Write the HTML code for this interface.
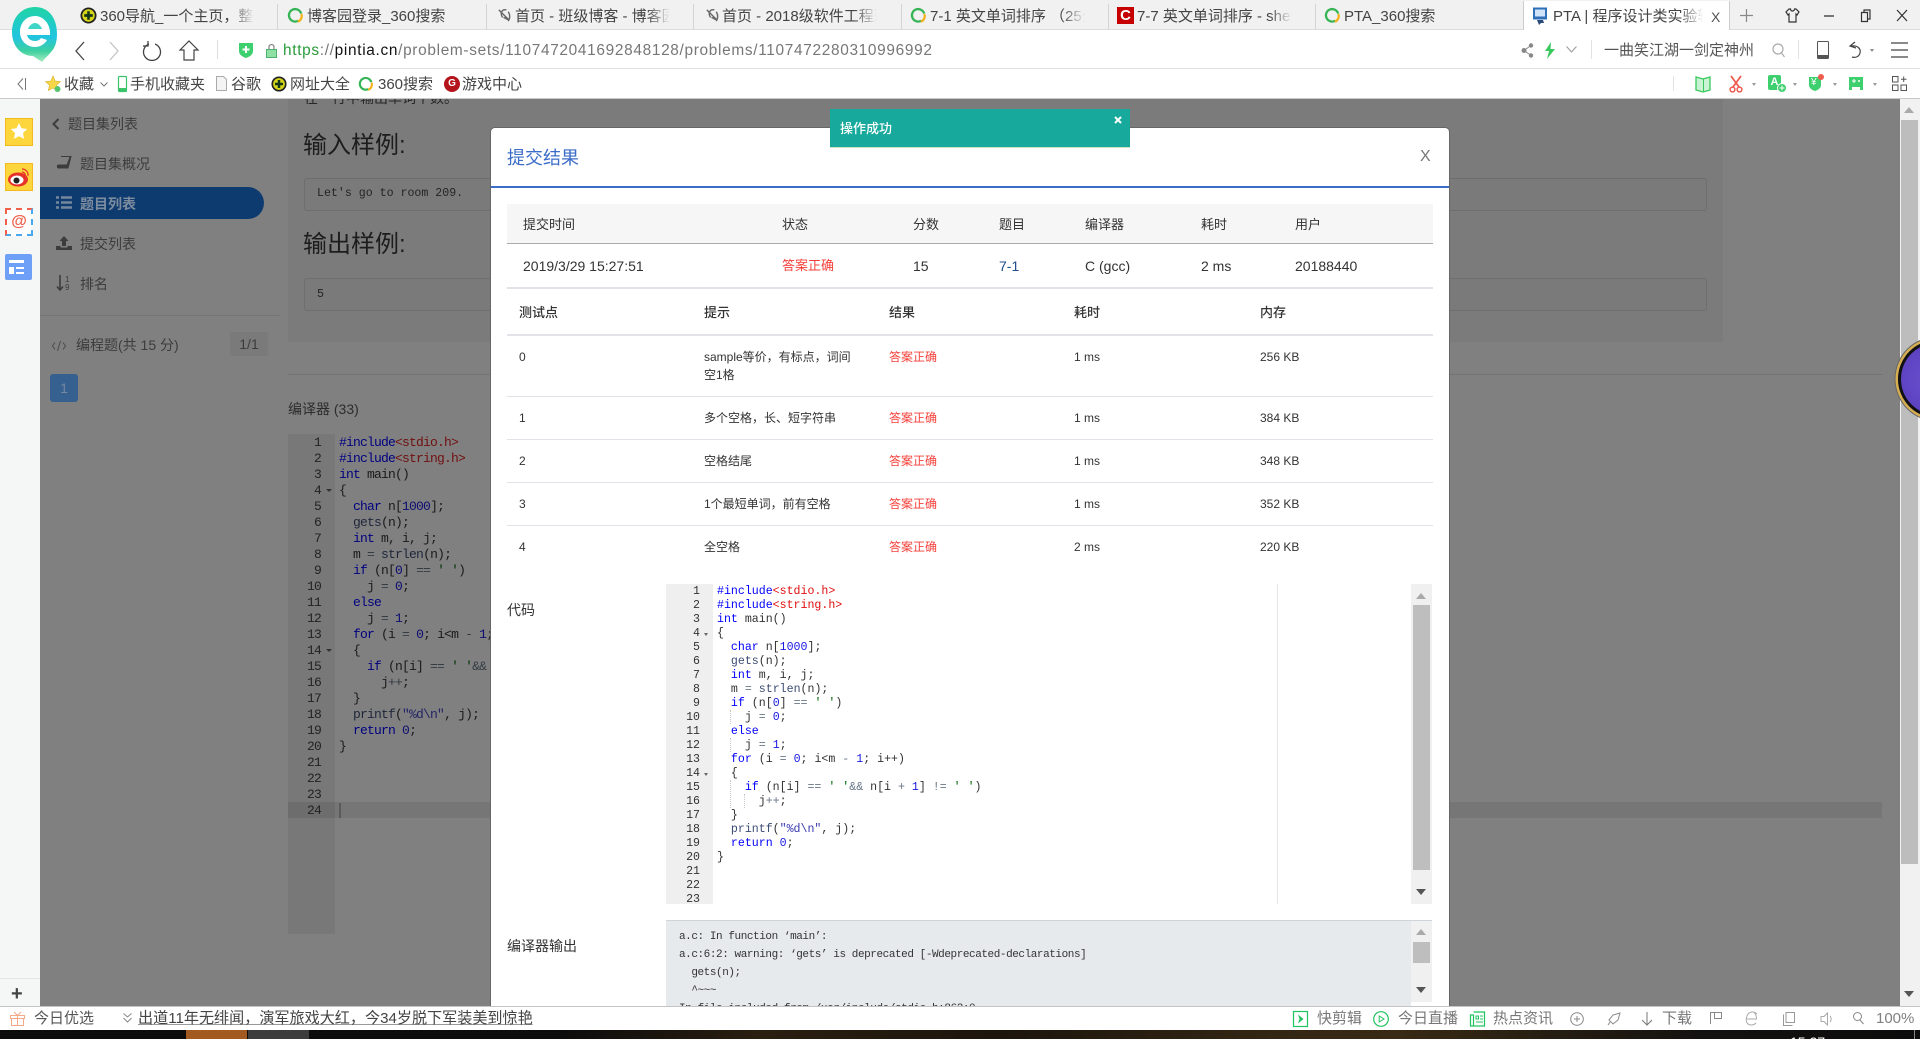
<!DOCTYPE html>
<html lang="zh"><head><meta charset="utf-8"><title>PTA</title>
<style>
html,body{margin:0;padding:0;width:1920px;height:1039px;overflow:hidden;background:#fff}
body{position:relative;font-family:"Liberation Sans","Noto Sans CJK SC",sans-serif;color:#333}
.a{position:absolute}
.t{position:absolute;white-space:nowrap;line-height:20px;height:20px}
svg{position:absolute;overflow:visible}
.tab{color:#444;font-size:15px;overflow:hidden;-webkit-mask-image:linear-gradient(90deg,#000 85%,transparent);mask-image:linear-gradient(90deg,#000 85%,transparent)}
.sep{position:absolute;width:1px;background:#d4d4d4}
.bm{font-size:15px;color:#444}
.nav{font-size:14px;color:#3c3c3c}
.c13{font-size:13px;color:#333}
.c12{font-size:12px;color:#333}
.c14{font-size:14px;color:#333}
.ok{font-size:12px;color:#f5403a}
.h{font-weight:500}
.hr{position:absolute;left:16px;width:926px;background:#e2e3e8}
pre{margin:0;position:absolute;font-family:"Liberation Mono",monospace;white-space:pre}
.m{font-size:11.6px;line-height:14px;color:#333}
.m .k{color:#00f}.m .i{color:#e01010}.m .n{color:#1a1ae0}.m .f{color:#3c4c72}.m .o{color:#687687}.m .s{color:#036a07}.m .v{color:#3a3ab0}
.b{font-size:13px;letter-spacing:-.8px;line-height:16px;color:#1a1a1a}
.b .k{color:#00007f}.b .i{color:#701010}.b .n{color:#0d0d70}.b .f{color:#1e2639}.b .o{color:#343b43}.b .s{color:#013503}.b .v{color:#232366}
.st{font-size:15px;color:#777}
.hd{font-size:24px;color:#1d1d1d}
.box{position:absolute;left:304px;width:1401px;height:31px;background:#7a7a7a;border:1px solid #6e6e6e;border-radius:3px}
.tri-u{position:absolute;width:0;height:0;border-left:5px solid transparent;border-right:5px solid transparent;border-bottom:6px solid #a9a9a9}
.tri-d{position:absolute;width:0;height:0;border-left:5px solid transparent;border-right:5px solid transparent;border-top:6px solid #555}
.guide{position:absolute;width:0;border-left:1px dotted #c8c8c8}
</style></head><body>
<svg width="0" height="0" style="position:absolute"><defs>
<symbol id="nav" viewBox="0 0 18 18"><circle cx="9" cy="9" r="8.5" fill="#222"/><circle cx="9" cy="9" r="6.6" fill="#d6d51a"/><path d="M9 4.5v9M4.5 9h9" stroke="#14371a" stroke-width="2.8"/></symbol>
<symbol id="q" viewBox="0 0 18 18"><path d="M12 14.5A6.6 6.6 0 1 1 15 7" fill="none" stroke="#35b455" stroke-width="2.4"/><path d="M15.3 7.5A6.6 6.6 0 0 1 11.5 15.6" fill="none" stroke="#f4b21c" stroke-width="2.4"/></symbol>
<symbol id="blog" viewBox="0 0 18 18"><path d="M3 3 14 14 8 11 M11 3C6 2 4 7 7 11M13 5c2 3 2 7 0 10" fill="none" stroke="#666" stroke-width="1.5"/></symbol>
</defs></svg>

<!-- tab bar -->
<div class="a" style="left:0;top:0;width:1920px;height:30px;background:#f1f1f1"></div>
<div class="a" style="left:0;top:29px;width:1920px;height:1px;background:#dcdcdc"></div>
<div class="sep" style="left:277px;top:4px;height:26px"></div><div class="sep" style="left:486px;top:4px;height:26px"></div><div class="sep" style="left:693px;top:4px;height:26px"></div><div class="sep" style="left:901px;top:4px;height:26px"></div><div class="sep" style="left:1108px;top:4px;height:26px"></div><div class="sep" style="left:1315px;top:4px;height:26px"></div>
<svg style="left:80px;top:7px" width="17" height="17"><use href="#nav"/></svg>
<div class="t tab" style="left:100px;top:7px;width:154px">360导航_一个主页，整个世界</div>
<svg style="left:287px;top:7px" width="17" height="17"><use href="#q"/></svg>
<div class="t c14" style="left:307px;top:7px;font-size:15px;color:#444">博客园登录_360搜索</div>
<svg style="left:496px;top:7px" width="17" height="17"><use href="#blog"/></svg>
<div class="t tab" style="left:515px;top:7px;width:155px">首页 - 班级博客 - 博客园首页</div>
<svg style="left:704px;top:7px" width="17" height="17"><use href="#blog"/></svg>
<div class="t tab" style="left:722px;top:7px;width:155px">首页 - 2018级软件工程班级</div>
<svg style="left:910px;top:7px" width="17" height="17"><use href="#q"/></svg>
<div class="t tab" style="left:930px;top:7px;width:155px">7-1 英文单词排序 （25分）</div>
<div class="a" style="left:1117px;top:7px;width:17px;height:17px;background:#c60000;color:#fff;font:bold 15px/17px 'Liberation Sans';text-align:center">C</div>
<div class="t tab" style="left:1137px;top:7px;width:155px">7-7 英文单词排序 - shell</div>
<svg style="left:1324px;top:7px" width="17" height="17"><use href="#q"/></svg>
<div class="t" style="left:1344px;top:7px;font-size:15px;color:#444">PTA_360搜索</div>
<div class="a" style="left:1523px;top:1px;width:207px;height:30px;background:#fff;border-left:1px solid #ccc;border-right:1px solid #ccc;box-sizing:border-box"></div>
<svg style="left:1532px;top:7px" width="17" height="18" viewBox="0 0 17 18"><rect x="1" y="0.5" width="14" height="12" fill="#2f6fb8"/><rect x="3" y="2.5" width="10" height="7" fill="#cfe4f8"/><path d="M5 13h6l1 3H9l-2 2z" fill="#2a4a7a"/></svg>
<div class="t tab" style="left:1553px;top:7px;width:150px">PTA | 程序设计类实验辅助教学</div>
<div class="t" style="left:1711px;top:7px;font-size:14px;color:#555">X</div>
<svg style="left:1739px;top:8px" width="15" height="15"><path d="M7.5 1v13M1 7.5h13" stroke="#888" stroke-width="1.2"/></svg>
<svg style="left:1785px;top:8px" width="15" height="15"><path d="M4 1 1 4l2 3 1-1v8h7V6l1 1 2-3-3-3H9.500a2 2 0 0 1-4 0z" fill="none" stroke="#333" stroke-width="1.2"/></svg>
<svg style="left:1823px;top:8px" width="13" height="14"><path d="M1 8h10" stroke="#333" stroke-width="1.300"/></svg>
<svg style="left:1860px;top:9px" width="12" height="13"><path d="M1.500 3.500h6v9h-6zM4 3.500V1h6v9H7.500" fill="none" stroke="#333" stroke-width="1.200"/></svg>
<svg style="left:1896px;top:9px" width="12" height="13"><path d="M1 1l10 11M11 1 1 12" stroke="#333" stroke-width="1.200"/></svg>

<!-- address bar -->
<div class="a" style="left:0;top:30px;width:1920px;height:38px;background:#fff;border-bottom:1px solid #e2e2e2"></div>
<svg style="left:74px;top:41px" width="12" height="20"><path d="M10 1 2 10l8 9" fill="none" stroke="#444" stroke-width="1.300"/></svg>
<svg style="left:108px;top:41px" width="12" height="20"><path d="M2 1l8 9-8 9" fill="none" stroke="#c4c4c4" stroke-width="1.300"/></svg>
<svg style="left:142px;top:40px" width="20" height="21"><path d="M7 3A8.500 8.500 0 1 0 13 3M6 0v5H1" fill="none" stroke="#444" stroke-width="1.300" transform="translate(0 1)"/></svg>
<svg style="left:179px;top:40px" width="20" height="21"><path d="M1 10 10 1l9 9h-4v10H5V10z" fill="none" stroke="#444" stroke-width="1.200"/></svg>
<div class="sep" style="left:217px;top:40px;height:19px;background:#ddd"></div>
<svg style="left:239px;top:42px" width="14" height="16"><path d="M0 1h14v8c0 4-4 6-7 7-3-1-7-3-7-7z" fill="#3ecf6f"/><path d="M7 4v7M3.500 7.500h7" stroke="#fff" stroke-width="2"/></svg>
<svg style="left:266px;top:43px" width="11" height="15"><path d="M3 7V4a2.500 2.500 0 0 1 5 0v3" fill="none" stroke="#888" stroke-width="1.300"/><rect x="0.500" y="6.500" width="10" height="8" fill="#8fe0a5" stroke="#50b070"/></svg>
<div class="t" style="left:283px;top:41px;font-size:15.4px;letter-spacing:.68px;color:#777"><span style="color:#2a9b3c">https</span>://<span style="color:#111">pintia.cn</span>/problem-sets/1107472041692848128/problems/1107472280310996992</div>
<svg style="left:1521px;top:43px" width="13" height="15"><circle cx="3" cy="7.500" r="2.500" fill="#888"/><circle cx="10" cy="2.500" r="2.200" fill="#888"/><circle cx="10" cy="12.500" r="2.200" fill="#888"/><path d="M3 7.500 10 2.500M3 7.500l7 5" stroke="#888"/></svg>
<svg style="left:1545px;top:42px" width="10" height="17"><path d="M6 0 0 9h4l-2 8 8-10H5.500z" fill="#38c85e"/></svg>
<svg style="left:1566px;top:46px" width="11" height="7"><path d="M0.500 0.500 5.500 6l5-5.500" fill="none" stroke="#999"/></svg>
<div class="sep" style="left:1591px;top:40px;height:19px;background:#e2e2e2"></div>
<div class="t" style="left:1604px;top:41px;font-size:15px;color:#555">一曲笑江湖一剑定神州</div>
<svg style="left:1772px;top:43px" width="14" height="15"><circle cx="6" cy="6" r="5" fill="none" stroke="#aaa" stroke-width="1.200"/><path d="M9.500 10l3 4" stroke="#aaa" stroke-width="1.200"/></svg>
<div class="sep" style="left:1798px;top:40px;height:19px;background:#e2e2e2"></div>
<svg style="left:1817px;top:41px" width="12" height="18"><rect x="0.500" y="0.500" width="11" height="17" rx="1" fill="none" stroke="#555"/><rect x="0.500" y="14" width="11" height="3.500" fill="#555"/></svg>
<svg style="left:1848px;top:41px" width="16" height="18"><path d="M7 1 2 5l6 2M3 5c7-1 10 3 9 7s-5 5-8 4" fill="none" stroke="#444" stroke-width="1.200"/></svg>
<div class="a" style="left:1870px;top:49px;border-left:2.500px solid transparent;border-right:2.500px solid transparent;border-top:3px solid #888"></div>
<svg style="left:1891px;top:42px" width="17" height="16"><path d="M0 1h17M0 8h17M0 15h17" stroke="#444" stroke-width="1.300"/></svg>

<!-- bookmarks -->
<div class="a" style="left:0;top:69px;width:1920px;height:29px;background:#fff"></div>
<div class="a" style="left:0;top:98px;width:1920px;height:1px;background:#c9c9c9"></div>
<svg style="left:16px;top:78px" width="10" height="12"><path d="M7 0.500 2 6l5 5.500M9.500 0v12" fill="none" stroke="#777"/></svg>
<svg style="left:45px;top:75px" width="16" height="18"><path d="M8 1l2.200 5 5.300.6-4 3.600 1.200 5.300L8 13l-4.700 2.500 1.200-5.300-4-3.600 5.300-.6z" fill="#f7d74a" stroke="#d9ad2a" stroke-width=".6"/><circle cx="12.500" cy="14" r="3" fill="#53c46f"/></svg>
<div class="t bm" style="left:64px;top:75px">收藏</div>
<svg style="left:100px;top:82px" width="8" height="5"><path d="M0.500 0.500 4 4l3.500-3.500" fill="none" stroke="#777"/></svg>
<svg style="left:118px;top:76px" width="9" height="16"><rect x="0.500" y="0.500" width="8" height="15" rx="1" fill="#fff" stroke="#3cc46a" stroke-width="1.200"/><rect x="1" y="12" width="7" height="3.500" fill="#3cc46a"/></svg>
<div class="t bm" style="left:130px;top:75px">手机收藏夹</div>
<svg style="left:216px;top:76px" width="11" height="15"><path d="M0.500 0.500h7l3 3v11H.5z" fill="#f4f4f4" stroke="#aaa"/></svg>
<div class="t bm" style="left:231px;top:75px">谷歌</div>
<svg style="left:271px;top:76px" width="16" height="16"><use href="#nav"/></svg>
<div class="t bm" style="left:290px;top:75px">网址大全</div>
<svg style="left:358px;top:76px" width="16" height="16"><use href="#q"/></svg>
<div class="t bm" style="left:378px;top:75px">360搜索</div>
<div class="a" style="left:444px;top:76px;width:16px;height:16px;border-radius:50%;background:#b4141c;color:#fff;font:bold 10px/16px 'Liberation Sans';text-align:center">G</div>
<div class="t bm" style="left:462px;top:75px">游戏中心</div>
<div class="sep" style="left:1673px;top:76px;height:15px;background:#e2e2e2"></div>
<svg style="left:1695px;top:75px" width="17" height="18"><path d="M1 2l7 2 7-2v13l-7 2-7-2z" fill="#c9f3d3" stroke="#38c85e" stroke-width="1.300"/><path d="M8.500 4v13" stroke="#38c85e"/></svg>
<svg style="left:1729px;top:75px" width="14" height="18"><path d="M2 1l8 11M12 1 4 12" stroke="#ef5b4f" stroke-width="1.800"/><circle cx="3.500" cy="14.500" r="2.400" fill="none" stroke="#ef5b4f" stroke-width="1.500"/><circle cx="10.500" cy="14.500" r="2.400" fill="none" stroke="#ef5b4f" stroke-width="1.500"/></svg>
<div class="a" style="left:1752px;top:83px;border-left:2.500px solid transparent;border-right:2.500px solid transparent;border-top:3px solid #999"></div>
<div class="a" style="left:1768px;top:75px;width:13px;height:15px;background:#3ecf6f;color:#fff;font:bold 11px/15px 'Liberation Sans';text-align:center;border-radius:2px">A</div>
<svg style="left:1777px;top:83px" width="10" height="10"><circle cx="5" cy="5" r="4.500" fill="#3ecf6f" stroke="#fff"/><path d="M5 2.500v5M2.500 5h5" stroke="#fff"/></svg>
<div class="a" style="left:1793px;top:83px;border-left:2.500px solid transparent;border-right:2.500px solid transparent;border-top:3px solid #999"></div>
<svg style="left:1808px;top:74px" width="16" height="18"><path d="M1 3h12v8c0 3-3 5-6 6-3-1-6-3-6-6z" fill="#3ecf6f"/><circle cx="13" cy="3" r="3" fill="#ef5b4f"/></svg>
<div class="t" style="left:1811px;top:73px;font-size:10px;color:#fff">¥</div>
<div class="a" style="left:1833px;top:83px;border-left:2.500px solid transparent;border-right:2.500px solid transparent;border-top:3px solid #999"></div>
<svg style="left:1848px;top:76px" width="16" height="15"><path d="M1 1h14v13h-3v-3H4v3H1z" fill="#3ecf6f"/><path d="M4 5h4M6 3v4" stroke="#fff"/><circle cx="11" cy="5" r="1" fill="#fff"/></svg>
<div class="a" style="left:1873px;top:83px;border-left:2.500px solid transparent;border-right:2.500px solid transparent;border-top:3px solid #999"></div>
<svg style="left:1892px;top:76px" width="15" height="15"><g fill="none" stroke="#555"><rect x=".5" y=".5" width="5.500" height="5.500"/><rect x=".5" y="9" width="5.500" height="5.500"/><rect x="9" y="9" width="5.500" height="5.500"/><path d="M11.700.5v5.500M9 3.200h5.500"/></g></svg>

<!-- logo -->
<svg style="left:10px;top:5px" width="50" height="58" viewBox="0 0 50 58"><defs><linearGradient id="lg" x1="0" y1="0" x2="0" y2="1"><stop offset="0" stop-color="#1fd4a4"/><stop offset=".55" stop-color="#21c4e0"/><stop offset=".8" stop-color="#3ed0a0"/><stop offset="1" stop-color="#a8edc0"/></linearGradient></defs>
<path d="M25 2C12 2 2 12 2 27s10 24 21 24l9 6c3-4 7-7 9-10 4-4 6-10 6-18C47 12 38 2 25 2z" fill="url(#lg)"/>
<path d="M25 11c-9 0-15 7-15 16s7 15 15 15c5 0 10-3 12-7l-6-2c-1 2-4 3-6 3-4 0-7-2-8-6h23c1-10-6-19-15-19z" fill="#fff"/><path d="M18 24c1-3 4-6 7-6s6 3 7 6z" fill="#3fd6c8"/></svg>

<!-- left side panel -->
<div class="a" style="left:0;top:99px;width:40px;height:907px;background:#f5f7f7"></div>
<div class="a" style="left:0;top:978px;width:40px;height:1px;background:#e4e6e6"></div>
<div class="a" style="left:5px;top:118px;width:28px;height:28px;background:#fdd53c;border:1px solid #f4b820;box-sizing:border-box"></div>
<svg style="left:10px;top:122px" width="18" height="18"><path d="M9 1l2.500 5.300 5.700.7-4.200 4 1.100 5.800L9 14.200l-5.100 2.600L5 11 .8 7l5.700-.7z" fill="#fff"/></svg>
<div class="a" style="left:5px;top:163px;width:28px;height:28px;background:#fdd53c;border:1px solid #f4b820;box-sizing:border-box"></div>
<svg style="left:7px;top:166px" width="25" height="22"><ellipse cx="11" cy="13.500" rx="10" ry="7" fill="#e6322a"/><ellipse cx="10" cy="14" rx="6.500" ry="4.500" fill="#fff"/><circle cx="9.500" cy="14.500" r="3" fill="#222"/><path d="M15 3a6 6 0 0 1 6 7M15 6a3 3 0 0 1 3 4" fill="none" stroke="#e6322a" stroke-width="1.200"/></svg>
<div class="a" style="left:5px;top:208px;width:28px;height:28px;box-sizing:border-box;background:#fff;border:2px dashed #f0604a;border-bottom-color:#4aa8ee;border-right-color:#4aa8ee;color:#f0604a;font:bold 16px/24px 'Liberation Sans';text-align:center">@</div>
<div class="a" style="left:5px;top:254px;width:27px;height:26px;background:#6ea0f8;border-radius:2px"></div><div class="a" style="left:9px;top:260px;width:15px;height:3px;background:#fff"></div><div class="a" style="left:9px;top:267px;width:5px;height:7px;background:#fff"></div><div class="a" style="left:16px;top:267px;width:8px;height:2px;background:#fff"></div><div class="a" style="left:16px;top:272px;width:8px;height:2px;background:#fff"></div>
<div class="a" style="left:11px;top:984px;font:bold 20px/20px 'Liberation Sans';color:#444">+</div>

<!-- dimmed page -->
<div class="a" style="left:40px;top:99px;width:1860px;height:907px;background:#808080;overflow:hidden">
 <div class="a" style="left:248px;top:0;width:1435px;height:243px;background:#7b7b7b"></div>
 <div class="a" style="left:248px;top:275px;width:1595px;height:1px;background:#747474"></div>
 <div class="a" style="left:0;top:216px;width:240px;height:1px;background:#767676"></div>
</div>
<div style="position:absolute;left:0;top:99px;width:1900px;height:907px;overflow:hidden">
<div class="t" style="left:304px;top:-11px;font-size:14px;color:#262626">在一行中输出单词个数。</div></div>
<svg style="left:52px;top:118px" width="8" height="12"><path d="M6.500 1 1.500 6l5 5" fill="none" stroke="#3c3c3c" stroke-width="2"/></svg>
<div class="t nav" style="left:68px;top:114px">题目集列表</div>
<svg style="left:57px;top:156px" width="15" height="14"><path d="M4 0.500h10L11 12H1.500C0 12 0 9 1.500 9H10L13 1" fill="#3c3c3c" stroke="#3c3c3c"/></svg>
<div class="t nav" style="left:80px;top:154px">题目集概况</div>
<div class="a" style="left:40px;top:187px;width:224px;height:32px;background:#0e3b6f;border-radius:0 16px 16px 0"></div>
<svg style="left:56px;top:196px" width="16" height="13"><path d="M0 1.500h3M5 1.500h11M0 6.500h3M5 6.500h11M0 11.500h3M5 11.500h11" stroke="#74879d" stroke-width="2.400"/></svg>
<div class="t nav" style="left:80px;top:194px;color:#7d8c9e;font-weight:bold">题目列表</div>
<svg style="left:56px;top:236px" width="16" height="14"><path d="M8 0 3.500 5H6v5h4V5h2.500zM0 10h4.500v1.500h7V10H16v4H0z" fill="#3c3c3c"/></svg>
<div class="t nav" style="left:80px;top:234px">提交列表</div>
<svg style="left:57px;top:275px" width="14" height="17"><path d="M3 0v14M0 11.500 3 15l3-3.500" fill="none" stroke="#3c3c3c" stroke-width="1.600"/></svg>
<div class="t" style="left:65px;top:270px;font-size:8px;color:#3c3c3c">1</div><div class="t" style="left:65px;top:278px;font-size:8px;color:#3c3c3c">9</div>
<div class="t nav" style="left:80px;top:274px">排名</div>
<svg style="left:52px;top:341px" width="14" height="10"><path d="M3 1.500 .5 5 3 8.500M11 1.500 13.500 5 11 8.500M8.500 0 5.500 10" fill="none" stroke="#4a4a4a"/></svg>
<div class="t nav" style="left:76px;top:335px">编程题(共 15 分)</div>
<div class="a" style="left:230px;top:332px;width:38px;height:24px;background:#7a7a7a;border-radius:3px;font-size:14px;line-height:24px;text-align:center;color:#3c3c3c">1/1</div>
<div class="a" style="left:50px;top:374px;width:28px;height:28px;background:#35608f;border-radius:3px;font-size:14px;line-height:28px;text-align:center;color:#75899f">1</div>

<div class="t hd" style="left:303px;top:136px">输入样例:</div>
<div class="box" style="top:178px"></div>
<pre class="a" style="left:317px;top:187px;font-size:11.600px;line-height:14px;color:#242424">Let's go to room 209.</pre>
<div class="t hd" style="left:303px;top:235px">输出样例:</div>
<div class="box" style="top:278px"></div>
<pre class="a" style="left:317px;top:288px;font-size:11.600px;line-height:14px;color:#242424">5</pre>
<div class="t" style="left:288px;top:399px;font-size:14px;color:#2c2c2c">编译器 (33)</div>

<!-- background editor -->
<div class="a" style="left:288px;top:434px;width:47px;height:500px;background:#787878"></div>
<div class="a" style="left:335px;top:802px;width:1547px;height:16px;background:#767676"></div>
<div class="a" style="left:288px;top:802px;width:47px;height:16px;background:#6d6d6d"></div>
<div class="a" style="left:339px;top:803px;width:2px;height:15px;background:#5a5a5a"></div>
<pre class="b" style="left:292px;top:435px;width:29px;text-align:right;color:#222">1
2
3
4
5
6
7
8
9
10
11
12
13
14
15
16
17
18
19
20
21
22
23
24</pre>
<div class="a" style="left:326px;top:489px;border-left:3px solid transparent;border-right:3px solid transparent;border-top:3px solid #333"></div>
<div class="a" style="left:326px;top:649px;border-left:3px solid transparent;border-right:3px solid transparent;border-top:3px solid #333"></div>
<pre class="b" style="left:339px;top:435px"><span class="k">#include</span><span class="i">&lt;stdio.h&gt;</span>
<span class="k">#include</span><span class="i">&lt;string.h&gt;</span>
<span class="k">int</span> main()
{
  <span class="k">char</span> n[<span class="n">1000</span>];
  <span class="f">gets</span>(n);
  <span class="k">int</span> m, i, j;
  m <span class="o">=</span> <span class="f">strlen</span>(n);
  <span class="k">if</span> (n[<span class="n">0</span>] <span class="o">==</span> <span class="s">' '</span>)
    j <span class="o">=</span> <span class="n">0</span>;
  <span class="k">else</span>
    j <span class="o">=</span> <span class="n">1</span>;
  <span class="k">for</span> (i <span class="o">=</span> <span class="n">0</span>; i&lt;m <span class="o">-</span> <span class="n">1</span>; i++)
  {
    <span class="k">if</span> (n[i] <span class="o">==</span> <span class="s">' '</span><span class="o">&amp;&amp;</span> n[i + 1] != ' ')
      j<span class="o">++</span>;
  }
  <span class="f">printf</span>(<span class="v">"%d\n"</span>, j);
  <span class="k">return</span> <span class="n">0</span>;
}</pre>

<!-- page scrollbar -->
<div class="a" style="left:1900px;top:99px;width:20px;height:907px;background:#f1f1f1"></div>
<div class="a" style="left:1901px;top:120px;width:17px;height:744px;background:#bdbdbd"></div>
<div class="tri-u" style="left:1904px;top:107px"></div>
<div class="tri-d" style="left:1904px;top:991px"></div>
<!-- purple ball -->
<div style="position:absolute;left:1890px;top:330px;width:30px;height:100px;overflow:hidden">
<div class="a" style="left:8px;top:10px;width:78px;height:78px;box-sizing:border-box;border-radius:50%;background:radial-gradient(circle at 40% 50%,#6a50cc,#5238b8);border:3px solid #111;box-shadow:0 0 0 2.500px #d6ae52,0 0 0 3.500px #666"></div></div>

<!-- modal -->
<div class="a" style="left:490px;top:127px;width:960px;height:879px;overflow:hidden;background:#fff;border:1px solid #666;border-bottom:none;border-radius:5px 5px 0 0;box-sizing:border-box">
 <div class="t" style="left:16px;top:20px;font-size:18px;color:#3b6cc8;line-height:20px">提交结果</div>
 <div class="t" style="left:929px;top:19px;font-size:16px;color:#777">X</div>
 <div class="a" style="left:0;top:58px;width:958px;height:2px;background:#3b6cc8"></div>
 <div class="a" style="left:16px;top:76px;width:926px;height:39px;background:#f6f6f6"></div>
 <div class="a" style="left:16px;top:115px;width:926px;height:1px;background:#aaa"></div>
 <div class="hr" style="top:159px;height:2px"></div>
 <div class="hr" style="top:206px;height:2px"></div>
 <div class="hr" style="top:268px;height:1px"></div>
 <div class="hr" style="top:311px;height:1px"></div>
 <div class="hr" style="top:354px;height:1px"></div>
 <div class="hr" style="top:397px;height:1px"></div>
</div>
<div class="t c13" style="left:523px;top:215px">提交时间</div><div class="t c13" style="left:782px;top:215px">状态</div><div class="t c13" style="left:913px;top:215px">分数</div><div class="t c13" style="left:999px;top:215px">题目</div><div class="t c13" style="left:1085px;top:215px">编译器</div><div class="t c13" style="left:1201px;top:215px">耗时</div><div class="t c13" style="left:1295px;top:215px">用户</div>
<div class="t c14" style="left:523px;top:256px">2019/3/29 15:27:51</div><div class="t" style="left:782px;top:256px;font-size:13px;color:#f5403a">答案正确</div><div class="t c14" style="left:913px;top:256px">15</div><div class="t c14" style="left:999px;top:256px;color:#1d4d8c">7-1</div><div class="t c14" style="left:1085px;top:256px">C (gcc)</div><div class="t c14" style="left:1201px;top:256px">2 ms</div><div class="t c14" style="left:1295px;top:256px">20188440</div>
<div class="t c13 h" style="left:519px;top:303px">测试点</div><div class="t c13 h" style="left:704px;top:303px">提示</div><div class="t c13 h" style="left:889px;top:303px">结果</div><div class="t c13 h" style="left:1074px;top:303px">耗时</div><div class="t c13 h" style="left:1260px;top:303px">内存</div>

<div class="t c12" style="left:519px;top:347px">0</div><div class="t c12" style="left:704px;top:347px">sample等价，有标点，词间</div><div class="t c12" style="left:704px;top:365px">空1格</div><div class="t ok" style="left:889px;top:347px">答案正确</div><div class="t c12" style="left:1074px;top:347px">1 ms</div><div class="t c12" style="left:1260px;top:347px">256 KB</div>
<div class="t c12" style="left:519px;top:408px">1</div><div class="t c12" style="left:704px;top:408px">多个空格，长、短字符串</div><div class="t ok" style="left:889px;top:408px">答案正确</div><div class="t c12" style="left:1074px;top:408px">1 ms</div><div class="t c12" style="left:1260px;top:408px">384 KB</div>
<div class="t c12" style="left:519px;top:451px">2</div><div class="t c12" style="left:704px;top:451px">空格结尾</div><div class="t ok" style="left:889px;top:451px">答案正确</div><div class="t c12" style="left:1074px;top:451px">1 ms</div><div class="t c12" style="left:1260px;top:451px">348 KB</div>
<div class="t c12" style="left:519px;top:494px">3</div><div class="t c12" style="left:704px;top:494px">1个最短单词，前有空格</div><div class="t ok" style="left:889px;top:494px">答案正确</div><div class="t c12" style="left:1074px;top:494px">1 ms</div><div class="t c12" style="left:1260px;top:494px">352 KB</div>
<div class="t c12" style="left:519px;top:537px">4</div><div class="t c12" style="left:704px;top:537px">全空格</div><div class="t ok" style="left:889px;top:537px">答案正确</div><div class="t c12" style="left:1074px;top:537px">2 ms</div><div class="t c12" style="left:1260px;top:537px">220 KB</div>

<div class="t c14" style="left:507px;top:600px">代码</div>
<div class="a" style="left:666px;top:584px;width:47px;height:320px;background:#efefef"></div>
<div class="a" style="left:1277px;top:584px;width:1px;height:320px;background:#e6e6e6"></div>
<pre class="m" style="left:671px;top:585px;width:29px;height:319px;overflow:hidden;text-align:right">1
2
3
4
5
6
7
8
9
10
11
12
13
14
15
16
17
18
19
20
21
22
23</pre>
<div class="a" style="left:704px;top:633px;border-left:2.500px solid transparent;border-right:2.500px solid transparent;border-top:3px solid #666"></div>
<div class="a" style="left:704px;top:773px;border-left:2.500px solid transparent;border-right:2.500px solid transparent;border-top:3px solid #666"></div>
<div class="guide" style="left:730px;top:710px;height:14px"></div><div class="guide" style="left:730px;top:738px;height:14px"></div><div class="guide" style="left:730px;top:780px;height:28px"></div><div class="guide" style="left:744px;top:794px;height:14px"></div>
<pre class="m" style="left:717px;top:585px"><span class="k">#include</span><span class="i">&lt;stdio.h&gt;</span>
<span class="k">#include</span><span class="i">&lt;string.h&gt;</span>
<span class="k">int</span> main()
{
  <span class="k">char</span> n[<span class="n">1000</span>];
  <span class="f">gets</span>(n);
  <span class="k">int</span> m, i, j;
  m <span class="o">=</span> <span class="f">strlen</span>(n);
  <span class="k">if</span> (n[<span class="n">0</span>] <span class="o">==</span> <span class="s">' '</span>)
    j <span class="o">=</span> <span class="n">0</span>;
  <span class="k">else</span>
    j <span class="o">=</span> <span class="n">1</span>;
  <span class="k">for</span> (i <span class="o">=</span> <span class="n">0</span>; i&lt;m <span class="o">-</span> <span class="n">1</span>; i++)
  {
    <span class="k">if</span> (n[i] <span class="o">==</span> <span class="s">' '</span><span class="o">&amp;&amp;</span> n[i <span class="o">+</span> <span class="n">1</span>] <span class="o">!=</span> <span class="s">' '</span>)
      j<span class="o">++</span>;
  }
  <span class="f">printf</span>(<span class="v">"%d\n"</span>, j);
  <span class="k">return</span> <span class="n">0</span>;
}</pre>
<div class="a" style="left:1411px;top:584px;width:21px;height:320px;background:#f0f0f0"></div>
<div class="a" style="left:1413px;top:605px;width:17px;height:265px;background:#bebebe"></div>
<div class="tri-u" style="left:1416px;top:593px"></div><div class="tri-d" style="left:1416px;top:889px"></div>

<div class="t c14" style="left:507px;top:936px">编译器输出</div>
<div class="a" style="left:666px;top:920px;width:766px;height:86px;background:#e7eaed;border-top:1px solid #cfd3da;box-sizing:border-box;overflow:hidden">
<pre class="a" style="left:13px;top:7px;font-size:11px;letter-spacing:-.43px;line-height:18px;color:#333">a.c: In function ‘main’:
a.c:6:2: warning: ‘gets’ is deprecated [-Wdeprecated-declarations]
  gets(n);
  ^~~~
In file included from /usr/include/stdio.h:862:0</pre></div>
<div class="a" style="left:1411px;top:921px;width:21px;height:81px;background:#f0f0f0"></div>
<div class="a" style="left:1411px;top:1002px;width:21px;height:4px;background:#fff"></div>
<div class="a" style="left:1413px;top:942px;width:17px;height:21px;background:#bebebe"></div>
<div class="tri-u" style="left:1416px;top:929px"></div><div class="tri-d" style="left:1416px;top:987px"></div>

<!-- toast -->
<div class="a" style="left:830px;top:109px;width:300px;height:39px;background:#17a99c;border-bottom:1px solid #cfe3c4;box-sizing:border-box"></div>
<div class="t" style="left:840px;top:119px;font-size:13px;color:#fff;font-weight:500">操作成功</div>
<svg style="left:1114px;top:116px" width="8" height="8"><path d="M1 1l6 6M7 1 1 7" stroke="#fff" stroke-width="2"/></svg>

<!-- status bar -->
<div class="a" style="left:0;top:1006px;width:1920px;height:1px;background:#c4c4c4"></div>
<div class="a" style="left:0;top:1007px;width:1920px;height:23px;background:#fff"></div>
<svg style="left:10px;top:1011px" width="15" height="15"><path d="M.5 4.500h14v3H.5zM1.500 7.500h12v7h-12zM7.500 4.500v10M4 1l3.500 3.500L11 1" fill="none" stroke="#f3a988"/></svg>
<div class="t st" style="left:34px;top:1009px;color:#555">今日优选</div>
<svg style="left:123px;top:1013px" width="9" height="10"><path d="M.5.500 4.500 4l4-3.500M.5 5 4.500 9l4-4" fill="none" stroke="#888"/></svg>
<div class="t" style="left:138px;top:1009px;font-size:15.100px;color:#444;text-decoration:underline;text-decoration-color:#999">出道11年无绯闻，演军旅戏大红，今34岁脱下军装美到惊艳</div>
<svg style="left:1293px;top:1011px" width="15" height="16"><rect x=".5" y=".5" width="14" height="15" fill="none" stroke="#1fc35f" stroke-width="1.200"/><path d="M5 3.500 10.500 8 5 12.500l1.500-4.500z" fill="#1fc35f"/></svg>
<div class="t st" style="left:1317px;top:1009px">快剪辑</div>
<svg style="left:1373px;top:1011px" width="16" height="16"><circle cx="8" cy="8" r="7.300" fill="none" stroke="#1fc35f" stroke-width="1.200"/><path d="M6.200 5v6L11 8z" fill="none" stroke="#1fc35f"/></svg>
<div class="t st" style="left:1398px;top:1009px">今日直播</div>
<svg style="left:1470px;top:1011px" width="15" height="16"><path d="M3.500 1h11v14H.5V4h3v11" fill="none" stroke="#1fc35f" stroke-width="1.200"/><path d="M6 5h2.500v3H6zM10 5h3M10 8h3M6 11h7" stroke="#1fc35f" fill="none"/></svg>
<div class="t st" style="left:1493px;top:1009px">热点资讯</div>
<svg style="left:1570px;top:1012px" width="14" height="14"><circle cx="7" cy="7" r="6.300" fill="none" stroke="#888"/><path d="M7 4v6M4 7h6" stroke="#888"/></svg>
<svg style="left:1607px;top:1012px" width="14" height="14"><path d="M13 1 6 3 2 8l4 4 5-4zM3 10l-2 3" fill="none" stroke="#888"/></svg>
<svg style="left:1641px;top:1012px" width="12" height="14"><path d="M6 0v13M1 8l5 5 5-5" fill="none" stroke="#777"/></svg>
<div class="t st" style="left:1662px;top:1009px">下载</div>
<svg style="left:1710px;top:1012px" width="12" height="12"><path d="M.5 12V.5h11v6H4.500V.5" fill="none" stroke="#888"/></svg>
<svg style="left:1745px;top:1011px" width="13" height="15"><path d="M12 3C9 0 4 0 2 5s0 9 4 9c2 0 4-1 5-2M1.500 8h10c0-3-1-5-2-6" fill="none" stroke="#aaa"/></svg>
<svg style="left:1783px;top:1012px" width="12" height="14"><path d="M.5 2.500v11h9M3 .5h8.500v10H3z" fill="none" stroke="#999"/></svg>
<svg style="left:1820px;top:1012px" width="13" height="14"><path d="M1 4.500h3L7.500 1v12L4 9.500H1zM10 4c1.500 1.500 1.500 4.500 0 6" fill="none" stroke="#aaa"/></svg>
<svg style="left:1853px;top:1012px" width="11" height="13"><circle cx="4.500" cy="4.500" r="4" fill="none" stroke="#888"/><path d="M7 8l3.500 4" stroke="#888"/></svg>
<div class="t st" style="left:1876px;top:1009px;color:#808080">100%</div>

<!-- taskbar -->
<div class="a" style="left:0;top:1030px;width:1920px;height:9px;background:linear-gradient(90deg,#0c0c0c 0,#0c0c0c 560px,#2a1e10 760px,#1c150c 1000px,#342614 1280px,#382a14 1400px,#141210 1700px,#0c0c0c 1920px)"></div>
<div class="a" style="left:186px;top:1030px;width:61px;height:9px;background:#a35a20"></div>
<div class="a" style="left:248px;top:1030px;width:61px;height:9px;background:#3c3c3c"></div>
<div class="a" style="left:1914px;top:1030px;width:1px;height:9px;background:#888"></div>
<div style="position:absolute;left:1780px;top:1030px;width:60px;height:9px;overflow:hidden"><div class="t" style="left:10px;top:2px;font-size:14px;color:#fff">15:27</div></div>
</body></html>
